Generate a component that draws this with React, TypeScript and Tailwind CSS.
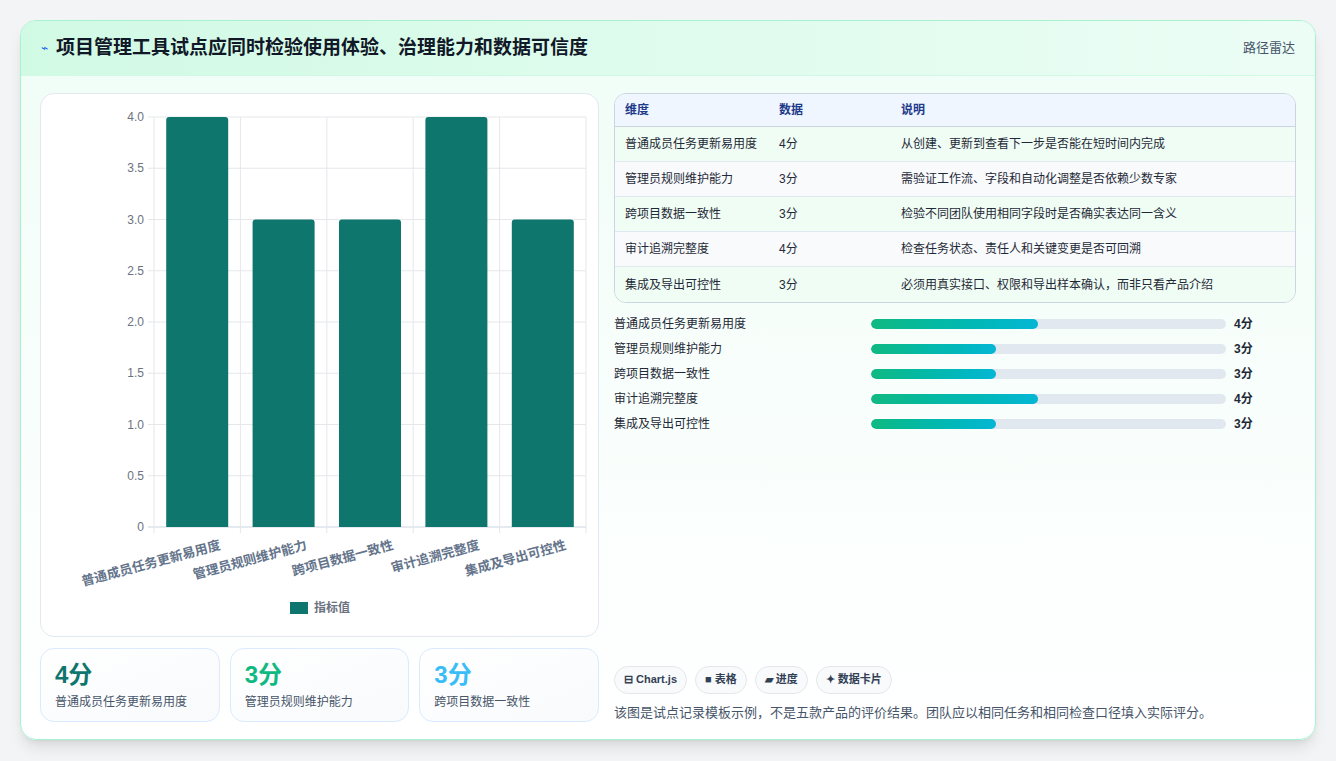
import React from "react";

const dims = [
  { n: "普通成员任务更新易用度", v: 4, d: "从创建、更新到查看下一步是否能在短时间内完成" },
  { n: "管理员规则维护能力", v: 3, d: "需验证工作流、字段和自动化调整是否依赖少数专家" },
  { n: "跨项目数据一致性", v: 3, d: "检验不同团队使用相同字段时是否确实表达同一含义" },
  { n: "审计追溯完整度", v: 4, d: "检查任务状态、责任人和关键变更是否可回溯" },
  { n: "集成及导出可控性", v: 3, d: "必须用真实接口、权限和导出样本确认，而非只看产品介绍" },
];

function Chart() {
  const x0 = 113, x1 = 545, y0 = 23, yb = 433;
  const slot = (x1 - x0) / 5;
  const ticks = [0, 0.5, 1, 1.5, 2, 2.5, 3, 3.5, 4];
  return (
    <svg width="558" height="543" viewBox="0 0 558 543" style={{ fontFamily: "'Liberation Sans','Noto Sans CJK SC',sans-serif" }}>
      {ticks.map((t) => {
        const y = yb - (t / 4) * (yb - y0);
        return (
          <g key={t}>
            <line x1={x0 - 6} x2={x1} y1={y} y2={y} stroke={t === 0 ? "#cbd5e1" : "#e5e7eb"} />
            <text x={x0 - 10} y={y + 4} textAnchor="end" fontSize="12" fill="#6b7280">{t === 0 ? "0" : t.toFixed(1)}</text>
          </g>
        );
      })}
      {[0, 1, 2, 3, 4, 5].map((i) => (
        <line key={i} x1={x0 + i * slot} x2={x0 + i * slot} y1={y0} y2={yb + 6} stroke="#e5e7eb" />
      ))}
      {dims.map((d, i) => {
        const h = (d.v / 4) * (yb - y0);
        const cx = x0 + i * slot + slot / 2;
        return (
          <g key={i}>
            <path d={`M${cx - 31} ${yb} V${yb - h + 3} Q${cx - 31} ${yb - h} ${cx - 28} ${yb - h} H${cx + 28} Q${cx + 31} ${yb - h} ${cx + 31} ${yb - h + 3} V${yb}Z`} fill="#0f766e" />
            <text transform={`translate(${cx + 24} ${yb + 22}) rotate(-15)`} textAnchor="end" fontSize="13" fontWeight="bold" fill="#64748b">{d.n}</text>
          </g>
        );
      })}
      <rect x="249" y="508" width="18" height="12" fill="#0f766e" />
      <text x="273" y="518" fontSize="12" fontWeight="bold" fill="#6b7280">指标值</text>
    </svg>
  );
}

export default function App() {
  const colors = ["text-[#0f766e]", "text-[#10b981]", "text-[#38bdf8]"];
  return (
    <div className="w-[1336px] h-[761px] bg-[#f3f4f6] pt-[20px] pl-[20px]" style={{ fontFamily: "'Liberation Sans','Noto Sans CJK SC',sans-serif" }}>
      <div className="w-[1296px] h-[720px] rounded-[16px] border border-[#a7f3d0] bg-gradient-to-b from-[#f0fdf7] to-white overflow-hidden flex flex-col shadow-lg">
        <div className="h-[55px] shrink-0 bg-gradient-to-r from-[#d1fae5] to-[#ecfdf5] border-b border-[#d1fae5] flex items-center justify-between px-[20px]">
          <div className="flex items-center gap-[8px]">
            <span className="text-[#2563eb] text-[12px]">⌁</span>
            <span className="text-[19px] font-bold text-[#111827]">项目管理工具试点应同时检验使用体验、治理能力和数据可信度</span>
          </div>
          <span className="text-[13px] text-[#475569]">路径雷达</span>
        </div>
        <div className="flex gap-[15px] px-[19px] pt-[17px]">
          <div className="w-[559px] flex flex-col gap-[11px]">
            <div className="h-[544px] rounded-[14px] border border-[#e2e8f0] bg-white overflow-hidden"><Chart /></div>
            <div className="grid grid-cols-3 gap-[10px]">
              {dims.slice(0, 3).map((d, i) => (
                <div key={i} className="h-[74px] rounded-[14px] border border-[#dbeafe] bg-gradient-to-br from-white to-[#f8fafc] px-[14px] pt-[12px]">
                  <div className={`text-[24px] font-bold leading-[28px] ${colors[i]}`}>{d.v}分</div>
                  <div className="text-[12px] text-[#475569] mt-[4px]">{d.n}</div>
                </div>
              ))}
            </div>
          </div>
          <div className="flex-1 flex flex-col">
            <div className="rounded-[12px] border border-[#cbd5e1] overflow-hidden text-[12px] text-[#1f2937]">
              <div className="h-[33px] flex items-center bg-[#eff6ff] border-b border-[#cbd5e1] font-bold text-[#1e3a8a]">
                <div className="w-[164px] pl-[10px]">维度</div><div className="w-[122px]">数据</div><div>说明</div>
              </div>
              {dims.map((d, i) => (
                <div key={i} className={`h-[35px] flex items-center ${i % 2 ? "bg-[#f8fafc]" : "bg-[#f0fdf4]"} ${i < 4 ? "border-b border-[#e2e8f0]" : ""}`}>
                  <div className="w-[164px] pl-[10px]">{d.n}</div><div className="w-[122px]">{d.v}分</div><div>{d.d}</div>
                </div>
              ))}
            </div>
            <div className="flex flex-col mt-[8px]">
              {dims.map((d, i) => (
                <div key={i} className="h-[25px] flex items-center text-[12px] text-[#1f2937]">
                  <div className="w-[257px]">{d.n}</div>
                  <div className="w-[355px] h-[10px] rounded-full bg-[#e2e8f0] overflow-hidden">
                    <div className="h-full rounded-full bg-gradient-to-r from-[#10b981] to-[#06b6d4]" style={{ width: `${(d.v / 4) * 47}%` }} />
                  </div>
                  <div className="ml-[8px] font-bold">{d.v}分</div>
                </div>
              ))}
            </div>
            <div className="flex-1" />
            <div className="flex gap-[8px] mt-[228px]">
              {["⊟ Chart.js", "■ 表格", "▰ 进度", "✦ 数据卡片"].map((t) => (
                <span key={t} className="h-[28px] px-[9px] flex items-center rounded-full border border-[#e5e7eb] bg-[#f8fafc] text-[11px] font-bold text-[#334155]">{t}</span>
              ))}
            </div>
            <div className="mt-[9px] text-[13px] text-[#475569]">该图是试点记录模板示例，不是五款产品的评价结果。团队应以相同任务和相同检查口径填入实际评分。</div>
          </div>
        </div>
      </div>
    </div>
  );
}
